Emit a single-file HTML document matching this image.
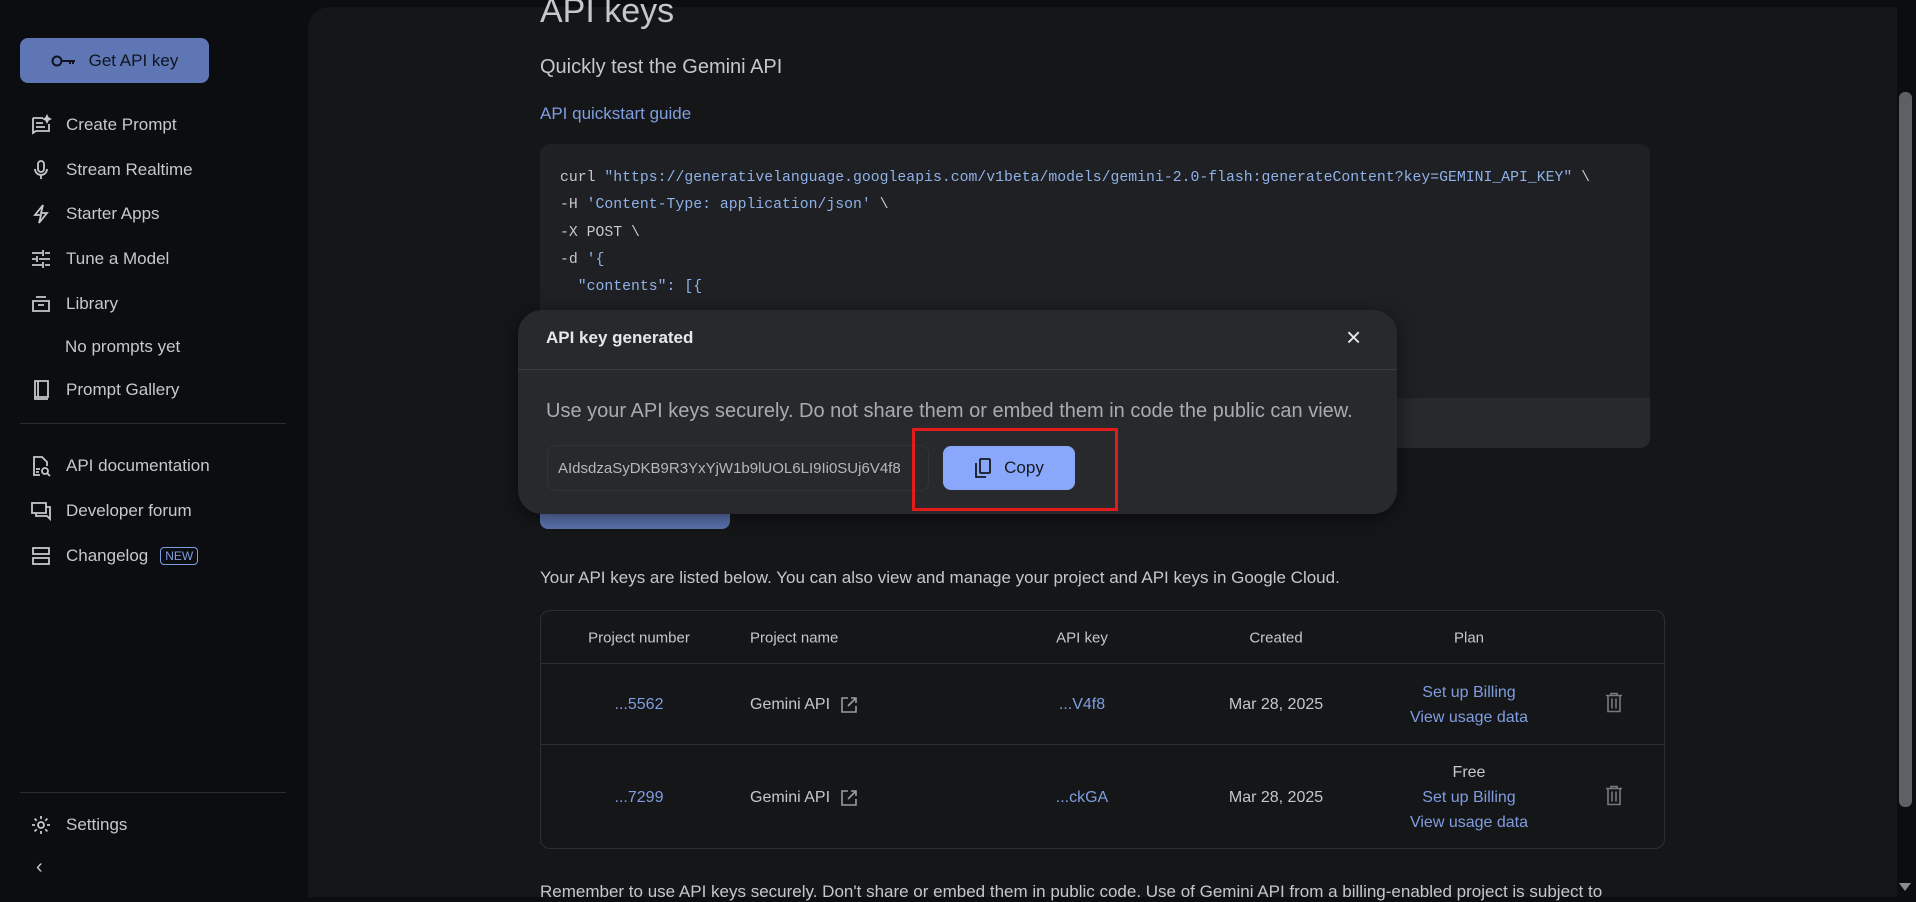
<!DOCTYPE html>
<html><head><meta charset="utf-8"><style>
*{box-sizing:border-box;margin:0;padding:0}
body{width:1916px;height:897px;overflow:hidden;background:#0c0d10;font-family:"Liberation Sans",sans-serif;color:#c4c7cc;position:relative}
.a{position:absolute}
.side{left:0;top:0;width:308px;height:897px}
.btn{left:20px;top:38px;width:189px;height:45px;background:#5e76b4;border-radius:8px;color:#0f1420;font-size:17px;display:flex;align-items:center;justify-content:center;gap:12px}
.it{left:30px;display:flex;align-items:center;gap:14px;font-size:17px;color:#c6c8cc;height:24px}
.it svg{width:22px;height:22px;flex:none}
.main{left:308px;top:7px;width:1589px;height:890px;background:#151618;border-radius:22px 0 0 0}
.code{left:540px;top:144px;width:1110px;height:304px;background:#1f2023;border-radius:10px;overflow:hidden;font-family:"Liberation Mono",monospace;font-size:14.8px;color:#c4c7cc}
.code div.l{position:absolute;left:20px;white-space:pre}
.s{color:#8fb1e8}
.tbl{left:540px;top:610px;width:1125px;height:239px;border:1px solid #2e2f33;border-radius:10px}
.c{position:absolute;transform:translate(-50%,-50%);font-size:16px;white-space:nowrap}
.blue{color:#7f9de0}
.modal{left:518px;top:310px;width:879px;height:204px;background:#28292c;border-radius:24px;box-shadow:0 4px 20px rgba(0,0,0,.5)}
</style></head><body>
<div class="a side">
<div class="a btn"><svg width="26" height="14" viewBox="0 0 26 14" fill="none" stroke="#0f1420" stroke-width="2"><circle cx="6" cy="7" r="4.5"/><path d="M10.5 7H24M19 7v3M22 7v3"/></svg>Get API key</div>
<div class="a it" style="top:113px"><svg viewBox="0 0 22 22" fill="none" stroke="#c6c8cc" stroke-width="1.8"><path d="M3 4h10M3 4v15l3-2h13v-7M6 9h7M6 13h9"/><path d="M17 2l1 2 2 1-2 1-1 2-1-2-2-1 2-1z" fill="#c6c8cc"/></svg>Create Prompt</div>
<div class="a it" style="top:158px"><svg viewBox="0 0 22 22" fill="none" stroke="#c6c8cc" stroke-width="1.8"><rect x="8" y="2" width="6" height="11" rx="3"/><path d="M5 10a6 6 0 0012 0M11 16v4"/></svg>Stream Realtime</div>
<div class="a it" style="top:202px"><svg viewBox="0 0 22 22" fill="none" stroke="#c6c8cc" stroke-width="1.8"><path d="M13 2L5 12h6l-2 8 8-10h-6z"/></svg>Starter Apps</div>
<div class="a it" style="top:247px"><svg viewBox="0 0 22 22" fill="none" stroke="#c6c8cc" stroke-width="1.8"><path d="M2 5h10M15 5h5M13 2v6M2 11h4M9 11h11M7 8v6M2 17h10M15 17h5M13 14v6"/></svg>Tune a Model</div>
<div class="a it" style="top:292px"><svg viewBox="0 0 22 22" fill="none" stroke="#c6c8cc" stroke-width="1.8"><path d="M6 4h10M3 8h16v10H3zM8 12h6"/></svg>Library</div>
<div class="a" style="left:65px;top:337px;font-size:17px;color:#c6c8cc">No prompts yet</div>
<div class="a it" style="top:378px"><svg viewBox="0 0 22 22" fill="none" stroke="#c6c8cc" stroke-width="1.8"><path d="M5 2h13v16H5zM8 2v16M5 18v2h13"/></svg>Prompt Gallery</div>
<div class="a" style="left:20px;top:423px;width:266px;height:1px;background:#2c2d31"></div>
<div class="a it" style="top:454px"><svg viewBox="0 0 22 22" fill="none" stroke="#c6c8cc" stroke-width="1.8"><path d="M10 20H4V2h8l5 5v4M6 14h4M6 17h3"/><circle cx="15" cy="16" r="3"/><path d="M17 18l3 3"/></svg>API documentation</div>
<div class="a it" style="top:499px"><svg viewBox="0 0 22 22" fill="none" stroke="#c6c8cc" stroke-width="1.8"><path d="M2 3h14v10H2zM6 13v3h11l3 3V7h-4"/></svg>Developer forum</div>
<div class="a it" style="top:544px"><svg viewBox="0 0 22 22" fill="none" stroke="#c6c8cc" stroke-width="1.8"><rect x="3" y="3" width="16" height="6"/><rect x="3" y="13" width="16" height="6"/></svg>Changelog <span style="font-size:12px;color:#7f9de0;border:1px solid #7f9de0;border-radius:4px;padding:1px 4px;margin-left:-2px">NEW</span></div>
<div class="a" style="left:20px;top:792px;width:266px;height:1px;background:#2c2d31"></div>
<div class="a it" style="top:813px"><svg viewBox="0 0 22 22" fill="none" stroke="#c6c8cc" stroke-width="1.8"><circle cx="11" cy="11" r="3"/><path d="M11 2v3M11 17v3M2 11h3M17 11h3M4.6 4.6l2.1 2.1M15.3 15.3l2.1 2.1M4.6 17.4l2.1-2.1M15.3 6.7l2.1-2.1"/></svg>Settings</div>
<div class="a" style="left:36px;top:856px;font-size:20px;color:#c6c8cc">‹</div>
</div>

<div class="a main"></div>
<div class="a" style="left:540px;top:-8px;font-size:34px;color:#c4c7cc">API keys</div>
<div class="a" style="left:540px;top:56px;font-size:20px;color:#c4c7cc">Quickly test the Gemini API</div>
<div class="a blue" style="left:540px;top:104px;font-size:17px">API quickstart guide</div>
<div class="a code">
<div class="l" style="top:26px">curl <span class="s">"https://generativelanguage.googleapis.com/v1beta/models/gemini-2.0-flash:generateContent?key=GEMINI_API_KEY"</span> \</div>
<div class="l" style="top:53px">-H <span class="s">'Content-Type: application/json'</span> \</div>
<div class="l" style="top:81px">-X POST \</div>
<div class="l" style="top:108px">-d <span class="s">'{</span></div>
<div class="l" style="top:135px"><span class="s">  "contents": [{</span></div>
<div class="a" style="left:0;top:254px;width:1110px;height:50px;background:#28292c"></div>
</div>
<div class="a" style="left:540px;top:495px;width:190px;height:34px;background:#5e76b4;border-radius:8px"></div>
<div class="a" style="left:540px;top:568px;font-size:17px">Your API keys are listed below. You can also view and manage your project and API keys in Google Cloud.</div>
<div class="a tbl">
<div class="a" style="left:0;top:52px;width:100%;height:1px;background:#2e2f33"></div>
<div class="a" style="left:0;top:133px;width:100%;height:1px;background:#2e2f33"></div>
<div class="c" style="left:98px;top:27px;font-size:15px">Project number</div>
<div class="c" style="left:209px;top:27px;font-size:15px;transform:translateY(-50%)">Project name</div>
<div class="c" style="left:541px;top:27px;font-size:15px">API key</div>
<div class="c" style="left:735px;top:27px;font-size:15px">Created</div>
<div class="c" style="left:928px;top:27px;font-size:15px">Plan</div>
<div class="c blue" style="left:98px;top:94px">...5562</div>
<div class="c" style="left:209px;top:94px;transform:translateY(-50%);display:flex;align-items:center;gap:10px">Gemini API <svg width="18" height="18" viewBox="0 0 18 18" fill="none" stroke="#9a9ca0" stroke-width="1.6"><path d="M8 2H2v14h14v-6M11 2h5v5M16 2L8 10"/></svg></div>
<div class="c blue" style="left:541px;top:94px">...V4f8</div>
<div class="c" style="left:735px;top:94px">Mar 28, 2025</div>
<div class="c blue" style="left:928px;top:82px">Set up Billing</div>
<div class="c blue" style="left:928px;top:107px">View usage data</div>
<div class="c" style="left:1073px;top:94px"><svg width="18" height="20" viewBox="0 0 18 20" fill="none" stroke="#77797d" stroke-width="1.6"><path d="M1 3h16M6 3V1h6v2M3 3v16h12V3M7 6v10M11 6v10"/></svg></div>
<div class="c blue" style="left:98px;top:187px">...7299</div>
<div class="c" style="left:209px;top:187px;transform:translateY(-50%);display:flex;align-items:center;gap:10px">Gemini API <svg width="18" height="18" viewBox="0 0 18 18" fill="none" stroke="#9a9ca0" stroke-width="1.6"><path d="M8 2H2v14h14v-6M11 2h5v5M16 2L8 10"/></svg></div>
<div class="c blue" style="left:541px;top:187px">...ckGA</div>
<div class="c" style="left:735px;top:187px">Mar 28, 2025</div>
<div class="c" style="left:928px;top:162px">Free</div>
<div class="c blue" style="left:928px;top:187px">Set up Billing</div>
<div class="c blue" style="left:928px;top:212px">View usage data</div>
<div class="c" style="left:1073px;top:187px"><svg width="18" height="20" viewBox="0 0 18 20" fill="none" stroke="#77797d" stroke-width="1.6"><path d="M1 3h16M6 3V1h6v2M3 3v16h12V3M7 6v10M11 6v10"/></svg></div>
</div>
<div class="a" style="left:540px;top:882px;font-size:17px">Remember to use API keys securely. Don't share or embed them in public code. Use of Gemini API from a billing-enabled project is subject to</div>
<div class="a" style="left:1899px;top:92px;width:13px;height:715px;background:#5f6065;border-radius:6px"></div>
<div class="a" style="left:1899px;top:883px;width:0;height:0;border-left:6px solid transparent;border-right:6px solid transparent;border-top:8px solid #8a8b8f"></div>

<div class="a modal">
<div class="a" style="left:28px;top:18px;font-size:17px;font-weight:bold;color:#e6e7ea">API key generated</div>
<div class="a" style="left:828px;top:12px;font-size:26px;color:#e6e7ea">×</div>
<div class="a" style="left:0;top:59px;width:879px;height:1px;background:#3b3c40"></div>
<div class="a" style="left:28px;top:90px;font-size:20px;color:#a9abb0;white-space:nowrap">Use your API keys securely. Do not share them or embed them in code the public can view.</div>
<div class="a" style="left:29px;top:135px;width:382px;height:46px;border:1px solid #323337;border-radius:8px;overflow:hidden;font-size:15px;color:#b5b7bb;padding:14px 10px;white-space:nowrap">AIdsdzaSyDKB9R3YxYjW1b9lUOL6LI9Ii0SUj6V4f8</div>
<div class="a" style="left:425px;top:136px;width:132px;height:44px;background:#89a8fb;border-radius:8px;display:flex;align-items:center;justify-content:center;gap:12px;font-size:17px;color:#16191f"><svg width="18" height="20" viewBox="0 0 18 20" fill="none" stroke="#16191f" stroke-width="1.8"><rect x="6" y="1" width="10" height="14" rx="1"/><path d="M2 5v14h10"/></svg>Copy</div>
</div>
<div class="a" style="left:912px;top:428px;width:206px;height:83px;border:3px solid #e31b1b"></div>
</body></html>
